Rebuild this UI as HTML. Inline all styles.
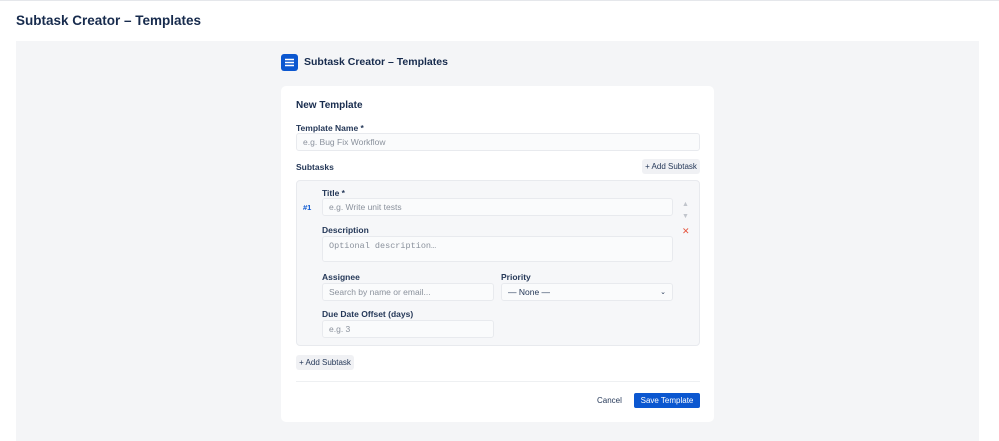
<!DOCTYPE html><html><head><style>
*{box-sizing:border-box;margin:0;padding:0}
body{width:999px;height:434px;overflow:hidden;background:#fff;font-family:"Liberation Sans",sans-serif;color:#172b4d;position:relative}
.a{position:absolute}
.top{left:0;top:0;width:999px;height:1px;background:#e5e7eb}
.h1{left:16px;top:13px;font-size:13.5px;font-weight:bold;color:#172b4d}
.panel{left:16px;top:41px;width:963px;height:400px;background:#f4f5f7}
.card{left:281px;top:86px;width:433px;height:336px;background:#fff;border-radius:5px}
.lbl{font-size:8.5px;font-weight:bold;color:#253858}
.in{background:#fafbfc;border:1px solid #e8eaee;border-radius:3px;font-size:8.5px;color:#8a919c;padding-left:6px;display:flex;align-items:center}
.btn{background:#f0f1f4;border-radius:3px;font-size:8px;color:#253858;display:flex;align-items:center;justify-content:center}
</style></head><body>
<div class="a top"></div>
<div class="a h1">Subtask Creator – Templates</div>
<div class="a panel"></div>
<div class="a" style="left:281px;top:54px;width:17px;height:17px;background:#0b57d0;border-radius:3px">
<svg width="17" height="17"><path d="M4 5.5h9M4 8.5h9M4 11.5h9" stroke="#fff" stroke-width="1.4"/></svg></div>
<div class="a" style="left:304px;top:56px;font-size:10.5px;font-weight:bold;color:#172b4d">Subtask Creator – Templates</div>
<div class="a card"></div>
<div class="a" style="left:296px;top:100px;font-size:10px;font-weight:bold">New Template</div>
<div class="a lbl" style="left:296px;top:123px">Template Name *</div>
<div class="a in" style="left:296px;top:133px;width:404px;height:18px">e.g. Bug Fix Workflow</div>
<div class="a lbl" style="left:296px;top:162px">Subtasks</div>
<div class="a btn" style="left:642px;top:159px;width:58px;height:15px">+ Add Subtask</div>
<div class="a" style="left:296px;top:180px;width:404px;height:166px;background:#f6f7f9;border:1px solid #e8eaee;border-radius:4px"></div>
<div class="a lbl" style="left:322px;top:188px">Title *</div>
<div class="a" style="left:303px;top:203px;font-size:7.5px;font-weight:bold;color:#0b57d0">#1</div>
<div class="a in" style="left:322px;top:198px;width:351px;height:18px">e.g. Write unit tests</div>
<div class="a" style="left:682px;top:201px;font-size:7px;color:#c1c5cc">▲</div>
<div class="a" style="left:682px;top:213px;font-size:7px;color:#c1c5cc">▼</div>
<div class="a" style="left:682px;top:226px;font-size:9px;color:#e5533d">✕</div>
<div class="a lbl" style="left:322px;top:225px">Description</div>
<div class="a in" style="left:322px;top:236px;width:351px;height:26px;align-items:flex-start;padding-top:4px;font-family:'Liberation Mono',monospace">Optional description…</div>
<div class="a lbl" style="left:322px;top:272px">Assignee</div>
<div class="a in" style="left:322px;top:283px;width:172px;height:18px">Search by name or email...</div>
<div class="a lbl" style="left:501px;top:272px">Priority</div>
<div class="a in" style="left:501px;top:283px;width:172px;height:18px;color:#253858">— None —<span style="position:absolute;right:6px;font-size:7px">⌄</span></div>
<div class="a lbl" style="left:322px;top:309px">Due Date Offset (days)</div>
<div class="a in" style="left:322px;top:320px;width:172px;height:18px">e.g. 3</div>
<div class="a btn" style="left:296px;top:355px;width:58px;height:15px">+ Add Subtask</div>
<div class="a" style="left:296px;top:381px;width:404px;height:1px;background:#eef0f2"></div>
<div class="a" style="left:597px;top:396px;font-size:8px;color:#253858">Cancel</div>
<div class="a" style="left:634px;top:393px;width:66px;height:15px;background:#0b57d0;border-radius:2px;color:#fff;font-size:8px;display:flex;align-items:center;justify-content:center">Save Template</div>
</body></html>
